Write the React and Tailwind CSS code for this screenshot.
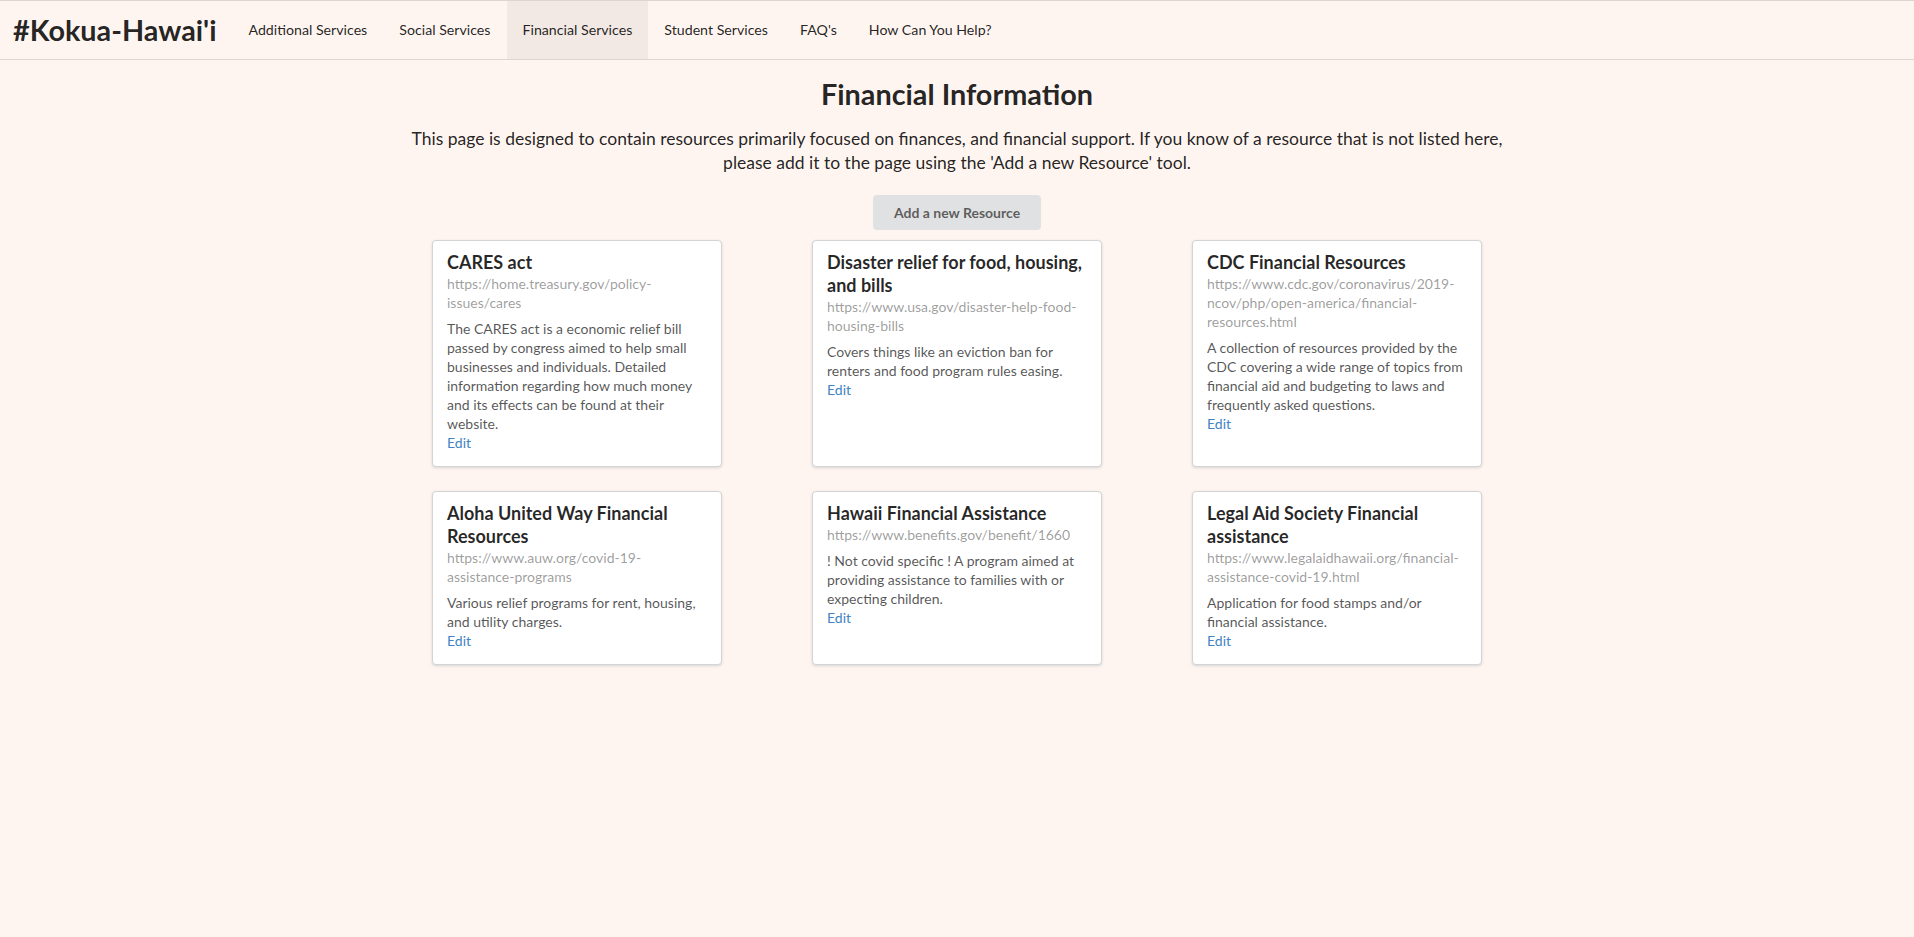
import React from 'react';

const navItems = [
  'Additional Services',
  'Social Services',
  'Financial Services',
  'Student Services',
  "FAQ's",
  'How Can You Help?',
];

const resources = [
  {
    name: 'CARES act',
    url: 'https://home.treasury.gov/policy-issues/cares',
    desc: 'The CARES act is a economic relief bill passed by congress aimed to help small businesses and individuals. Detailed information regarding how much money and its effects can be found at their website.',
  },
  {
    name: 'Disaster relief for food, housing, and bills',
    url: 'https://www.usa.gov/disaster-help-food-housing-bills',
    desc: 'Covers things like an eviction ban for renters and food program rules easing.',
  },
  {
    name: 'CDC Financial Resources',
    url: 'https://www.cdc.gov/coronavirus/2019-ncov/php/open-america/financial-resources.html',
    desc: 'A collection of resources provided by the CDC covering a wide range of topics from financial aid and budgeting to laws and frequently asked questions.',
  },
  {
    name: 'Aloha United Way Financial Resources',
    url: 'https://www.auw.org/covid-19-assistance-programs',
    desc: 'Various relief programs for rent, housing, and utility charges.',
  },
  {
    name: 'Hawaii Financial Assistance',
    url: 'https://www.benefits.gov/benefit/1660',
    desc: '! Not covid specific ! A program aimed at providing assistance to families with or expecting children.',
  },
  {
    name: 'Legal Aid Society Financial assistance',
    url: 'https://www.legalaidhawaii.org/financial-assistance-covid-19.html',
    desc: 'Application for food stamps and/or financial assistance.',
  },
];

const ResourceCard = ({ r }) => (
  <div className="w-[290px] bg-white rounded-[4px] border border-[#d4d4d5] shadow-[0_1px_3px_0_#d4d4d5] p-[14px] text-left">
    <div className="mt-[-4px] text-[18px] leading-[23px] font-bold text-[rgba(0,0,0,0.85)]">{r.name}</div>
    <div className="text-[14px] leading-[19px] text-[rgba(0,0,0,0.4)]">{r.url}</div>
    <div className="mt-[7px] text-[14px] leading-[19px] text-[rgba(0,0,0,0.68)]">{r.desc}</div>
    <a href="#" className="block text-[14px] leading-[19px] text-[#4183c4]">Edit</a>
  </div>
);

export default function App() {
  return (
    <div className="min-h-screen bg-[#fff5f0] font-['Lato',sans-serif] text-[rgba(0,0,0,0.87)]">
      <div className="h-[60px] flex items-stretch border-y border-[rgba(34,36,38,0.15)]">
        <div className="flex items-center pl-[13px] pr-[16px] text-[28.8px] font-bold leading-[36px]">#Kokua-Hawai'i</div>
        {navItems.map(item => (
          <a
            key={item}
            href="#"
            className={`flex items-center px-4 text-[14.2px] ${
              item === 'Financial Services' ? 'bg-[#f2e9e4]' : ''
            }`}
          >
            {item}
          </a>
        ))}
      </div>

      <div className="w-[1127px] mx-auto text-center">
        <h1 className="mt-[16px] text-[28.8px] leading-[36px] font-bold">Financial Information</h1>
        <p className="mt-[15px] text-[17.5px] leading-[24.4px]">
          This page is designed to contain resources primarily focused on finances, and financial support. If you know of a resource that is not listed here, please add it to the page using the 'Add a new Resource' tool.
        </p>
        <button className="mt-[19px] w-[168px] h-[35px] rounded-[4px] bg-[#e0e1e2] text-[14px] font-bold text-[rgba(0,0,0,0.6)]">
          Add a new Resource
        </button>
        <div className="mt-[10px] mx-auto w-[1050px] flex flex-wrap justify-center gap-x-[90px] gap-y-[24px]">
          {resources.map(r => (
            <ResourceCard key={r.name} r={r} />
          ))}
        </div>
      </div>
    </div>
  );
}
